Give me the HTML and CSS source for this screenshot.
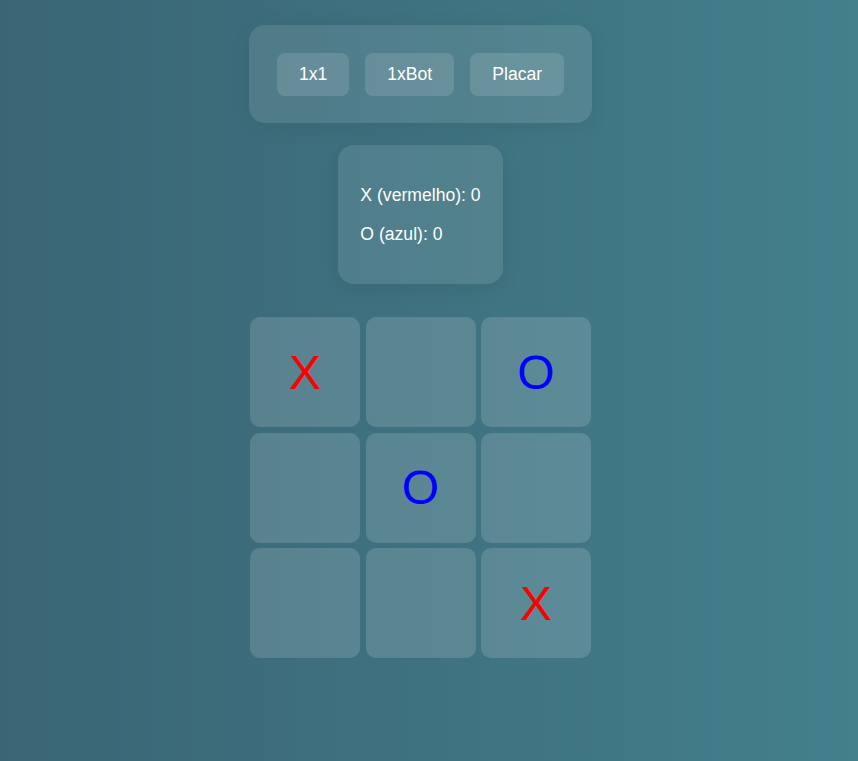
FILE: index.html
```html
<!DOCTYPE html>
<html lang="pt">
<head>
<meta charset="utf-8">
<title>Jogo da Velha</title>
<link rel="stylesheet" href="styles.css">
</head>
<body>
<main class="app">
  <nav class="menu">
    <button class="btn">1x1</button>
    <button class="btn">1xBot</button>
    <button class="btn">Placar</button>
  </nav>
  <section class="score">
    <p>X (vermelho): 0</p>
    <p>O (azul): 0</p>
  </section>
  <div class="board">
    <div class="cell x">X</div>
    <div class="cell"></div>
    <div class="cell o">O</div>
    <div class="cell"></div>
    <div class="cell o">O</div>
    <div class="cell"></div>
    <div class="cell"></div>
    <div class="cell"></div>
    <div class="cell x">X</div>
  </div>
</main>
</body>
</html>
```

FILE: styles.css
```css
html, body {
  margin: 0;
  height: 100%;
}
body {
  background: linear-gradient(to right, #3a6575, #437f8c);
  font-family: "Liberation Sans", Arial, sans-serif;
  color: #fff;
}
.app {
  width: 841px;
  display: flex;
  flex-direction: column;
  align-items: center;
  padding-top: 25px;
}
.menu {
  display: flex;
  gap: 16px;
  padding: 27.5px 28px;
  background: rgba(255, 255, 255, 0.1);
  border-radius: 16px;
  box-shadow: 0 4px 20px rgba(0, 0, 0, 0.08);
}
.btn {
  font-family: inherit;
  font-size: 17.6px;
  color: #fff;
  background: rgba(255, 255, 255, 0.13);
  border: none;
  border-radius: 8px;
  padding: 12px 22px;
  line-height: 19px;
}
.score {
  margin-top: 22px;
  padding: 21px 22px;
  background: rgba(255, 255, 255, 0.1);
  border-radius: 16px;
  box-shadow: 0 4px 20px rgba(0, 0, 0, 0.08);
  font-size: 17.6px;
}
.score p {
  margin: 19px 0;
  line-height: 20px;
}
.board {
  margin-top: 33px;
  display: grid;
  grid-template-columns: repeat(3, 110px);
  grid-auto-rows: 110px;
  gap: 5.5px;
}
.cell {
  background: rgba(255, 255, 255, 0.15);
  border-radius: 10px;
  display: flex;
  align-items: center;
  justify-content: center;
  font-size: 48px;
}
.cell.x { color: #ff0000; }
.cell.o { color: #0000ff; }
```
